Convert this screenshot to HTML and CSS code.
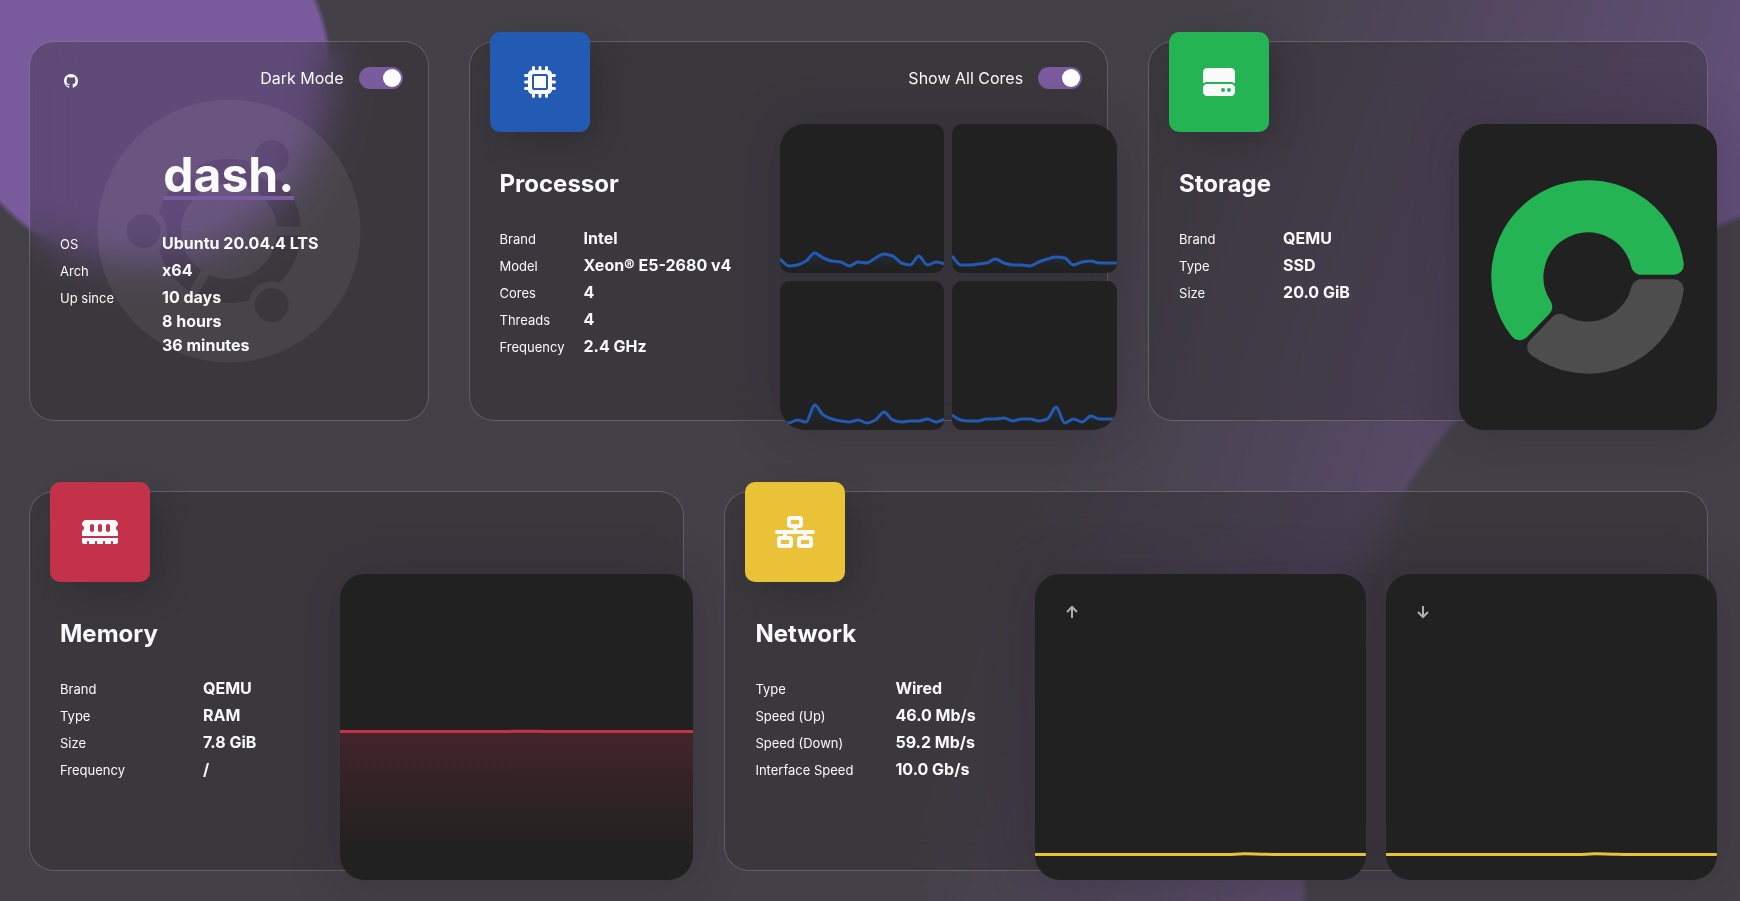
FILE: index.html
```html
<!DOCTYPE html>
<html lang="en">
<head>
  <meta charset="utf-8">
  <meta name="viewport" content="width=device-width, initial-scale=1">
  <title>dash.</title>
  <link rel="stylesheet" href="styles.css">
</head>
<body>
  <main class="dashboard">
    <div class="row">
      <section class="card card-server">
        <svg class="distro" viewBox="-132 -132 264 264" aria-hidden="true">
          <mask id="distro-mask" maskUnits="userSpaceOnUse" x="-132" y="-132" width="264" height="264">
            <circle r="131.5" fill="#fff"/>
            <circle r="60" fill="none" stroke="#000" stroke-width="24"/>
            <g stroke="#fff" stroke-width="9">
              <path d="M46 0H74"/>
              <path d="M46 0H74" transform="rotate(120)"/>
              <path d="M46 0H74" transform="rotate(240)"/>
            </g>
            <g fill="#000" stroke="#fff" stroke-width="6.5">
              <circle cx="-85.5" cy="0" r="20.2"/>
              <circle cx="42.7" cy="-74" r="20.2"/>
              <circle cx="42.7" cy="74" r="20.2"/>
            </g>
          </mask>
          <rect x="-132" y="-132" width="264" height="264" fill="#fff" mask="url(#distro-mask)"/>
        </svg>
        <header class="server-head">
          <a class="github" href="#" aria-label="GitHub">
            <svg viewBox="0 0 16 16" aria-hidden="true"><path d="M8 0C3.58 0 0 3.58 0 8c0 3.54 2.29 6.53 5.47 7.59.4.07.55-.17.55-.38 0-.19-.01-.82-.01-1.49-2.01.37-2.53-.49-2.69-.94-.09-.23-.48-.94-.82-1.13-.28-.15-.68-.52-.01-.53.63-.01 1.08.58 1.23.82.72 1.21 1.87.87 2.33.66.07-.52.28-.87.51-1.07-1.78-.2-3.64-.89-3.64-3.95 0-.87.31-1.59.82-2.15-.08-.2-.36-1.02.08-2.12 0 0 .67-.21 2.2.82.64-.18 1.32-.27 2-.27s1.36.09 2 .27c1.53-1.04 2.2-.82 2.2-.82.44 1.1.16 1.92.08 2.12.51.56.82 1.27.82 2.15 0 3.07-1.87 3.75-3.65 3.95.29.25.54.73.54 1.48 0 1.07-.01 1.93-.01 2.2 0 .21.15.46.55.38A8.01 8.01 0 0 0 16 8c0-4.42-3.58-8-8-8z"/></svg>
          </a>
          <label class="switch">Dark Mode <input type="checkbox" checked></label>
        </header>
        <h1 class="brand">dash.</h1>
        <table class="specs">
          <tr><th scope="row">OS</th><td>Ubuntu 20.04.4 LTS</td></tr>
          <tr><th scope="row">Arch</th><td>x64</td></tr>
          <tr><th scope="row">Up since</th><td>10 days<br>8 hours<br>36 minutes</td></tr>
        </table>
      </section>

      <section class="card card-cpu">
        <div class="info">
          <div class="badge badge-cpu">
            <svg viewBox="0 0 512 512" aria-hidden="true"><path d="M176 24c0-13.3-10.7-24-24-24s-24 10.7-24 24V64c-35.3 0-64 28.7-64 64H24c-13.3 0-24 10.7-24 24s10.7 24 24 24H64v56H24c-13.3 0-24 10.7-24 24s10.7 24 24 24H64v56H24c-13.3 0-24 10.7-24 24s10.7 24 24 24H64c0 35.3 28.7 64 64 64v40c0 13.3 10.7 24 24 24s24-10.7 24-24V448h56v40c0 13.3 10.7 24 24 24s24-10.7 24-24V448h56v40c0 13.3 10.7 24 24 24s24-10.7 24-24V448c35.3 0 64-28.7 64-64h40c13.3 0 24-10.7 24-24s-10.7-24-24-24H448V280h40c13.3 0 24-10.7 24-24s-10.7-24-24-24H448V176h40c13.3 0 24-10.7 24-24s-10.7-24-24-24H448c0-35.3-28.7-64-64-64V24c0-13.3-10.7-24-24-24s-24 10.7-24 24V64H280V24c0-13.3-10.7-24-24-24s-24 10.7-24 24V64H176V24zM160 128H352c17.7 0 32 14.3 32 32V352c0 17.7-14.3 32-32 32H160c-17.7 0-32-14.3-32-32V160c0-17.7 14.3-32 32-32zm192 32H160V352H352V160z"/></svg>
          </div>
          <h2 class="title">Processor</h2>
          <table class="specs">
            <tr><th scope="row">Brand</th><td>Intel</td></tr>
            <tr><th scope="row">Model</th><td>Xeon® E5-2680 v4</td></tr>
            <tr><th scope="row">Cores</th><td>4</td></tr>
            <tr><th scope="row">Threads</th><td>4</td></tr>
            <tr><th scope="row">Frequency</th><td>2.4 GHz</td></tr>
          </table>
        </div>
        <div class="visual">
          <div class="visual-head">
            <label class="switch">Show All Cores <input type="checkbox" checked></label>
          </div>
          <div class="charts charts-cores">
            <div class="chart"><svg class="plot plot-cpu" viewBox="0 0 165 149" preserveAspectRatio="none" data-floor="143" data-values="135 142 141 137 129 134 137 138 142 138 139 134 130 132 139 141 132 141 138 140"></svg></div>
            <div class="chart"><svg class="plot plot-cpu" viewBox="0 0 165 149" preserveAspectRatio="none" data-floor="143" data-values="132 141 141 140 139 135 139 141 141 142 138 135 133 134 141 138 137 139 139 139"></svg></div>
            <div class="chart"><svg class="plot plot-cpu" viewBox="0 0 165 149" preserveAspectRatio="none" data-floor="143" data-values="142 142 139 141 124 134 138 140 141 139 142 139 131 139 141 140 140 138 141 138"></svg></div>
            <div class="chart"><svg class="plot plot-cpu" viewBox="0 0 165 149" preserveAspectRatio="none" data-floor="143" data-values="134 139 140 140 138 138 137 140 138 138 140 138 126 142 138 141 135 138 138 138"></svg></div>
          </div>
        </div>
      </section>

      <section class="card card-storage">
        <div class="info">
          <div class="badge badge-storage">
            <svg viewBox="0 0 512 512" aria-hidden="true"><path d="M0 96C0 60.7 28.7 32 64 32H448c35.3 0 64 28.7 64 64V280.4c-17-15.2-39.4-24.4-64-24.4H64c-24.6 0-47 9.2-64 24.4V96zM64 288H448c35.3 0 64 28.7 64 64v64c0 35.3-28.7 64-64 64H64c-35.3 0-64-28.7-64-64V352c0-35.3 28.7-64 64-64zM320 416a32 32 0 1 0 0-64 32 32 0 1 0 0 64zm128-32a32 32 0 1 0-64 0 32 32 0 1 0 64 0z"/></svg>
          </div>
          <h2 class="title">Storage</h2>
          <table class="specs">
            <tr><th scope="row">Brand</th><td>QEMU</td></tr>
            <tr><th scope="row">Type</th><td>SSD</td></tr>
            <tr><th scope="row">Size</th><td>20.0 GiB</td></tr>
          </table>
        </div>
        <div class="visual">
          <div class="visual-head"></div>
          <div class="charts">
            <div class="chart chart-pie">
              <svg class="donut" viewBox="-97 -97 194 194" role="img" aria-label="Storage usage">
                <path class="donut-used" d="M85.8-12.2A86.7 86.7 0 1 0-68.4 53.2L-45.7 29.7A54.5 54.5 0 1 1 53.1-12.2Z"/>
                <path class="donut-free" d="M85.8 12.2A86.7 86.7 0 0 1-50.8 70.2L-28.1 46.7A54.5 54.5 0 0 0 53.1 12.2Z"/>
              </svg>
            </div>
          </div>
        </div>
      </section>
    </div>

    <div class="row">
      <section class="card card-memory">
        <div class="info">
          <div class="badge badge-memory">
            <svg viewBox="0 0 576 512" aria-hidden="true"><path d="M64 64C28.7 64 0 92.7 0 128v7.4c0 6.8 4.4 12.6 10.1 16.3C23.3 160.3 32 175.1 32 192s-8.7 31.7-21.9 40.3C4.4 236 0 241.8 0 248.6V320H576V248.6c0-6.8-4.4-12.6-10.1-16.3C552.7 223.7 544 208.9 544 192s8.7-31.7 21.9-40.3c5.7-3.7 10.1-9.5 10.1-16.3V128c0-35.3-28.7-64-64-64H64zM576 352H0v64c0 17.7 14.3 32 32 32H80V416c0-8.8 7.2-16 16-16s16 7.2 16 16v32h96V416c0-8.8 7.2-16 16-16s16 7.2 16 16v32h96V416c0-8.8 7.2-16 16-16s16 7.2 16 16v32h96V416c0-8.8 7.2-16 16-16s16 7.2 16 16v32h48c17.7 0 32-14.3 32-32V352zM192 160v64c0 17.7-14.3 32-32 32s-32-14.3-32-32V160c0-17.7 14.3-32 32-32s32 14.3 32 32zm128 0v64c0 17.7-14.3 32-32 32s-32-14.3-32-32V160c0-17.7 14.3-32 32-32s32 14.3 32 32zm128 0v64c0 17.7-14.3 32-32 32s-32-14.3-32-32V160c0-17.7 14.3-32 32-32s32 14.3 32 32z"/></svg>
          </div>
          <h2 class="title">Memory</h2>
          <table class="specs">
            <tr><th scope="row">Brand</th><td>QEMU</td></tr>
            <tr><th scope="row">Type</th><td>RAM</td></tr>
            <tr><th scope="row">Size</th><td>7.8 GiB</td></tr>
            <tr><th scope="row">Frequency</th><td>/</td></tr>
          </table>
        </div>
        <div class="visual">
          <div class="visual-head"></div>
          <div class="charts">
            <div class="chart"><svg class="plot plot-memory" viewBox="0 0 354 306" preserveAspectRatio="none" data-floor="281" data-values="157.5 157.5 157.5 157.5 157.4 157.5 157.5 157.5 157.5 157.4 157.2 157.4 157.5 157.5 157.5 157.5 157.5 157.5 157.5 157.5"></svg></div>
          </div>
        </div>
      </section>

      <section class="card card-network">
        <div class="info">
          <div class="badge badge-network">
            <svg viewBox="0 0 640 512" aria-hidden="true"><path d="M256 64H384v64H256V64zM240 0c-26.5 0-48 21.5-48 48v96c0 26.5 21.5 48 48 48h48v32H32c-17.7 0-32 14.3-32 32s14.3 32 32 32h96v32H80c-26.5 0-48 21.5-48 48v96c0 26.5 21.5 48 48 48H240c26.5 0 48-21.5 48-48V368c0-26.5-21.5-48-48-48H192V288H448v32H400c-26.5 0-48 21.5-48 48v96c0 26.5 21.5 48 48 48H560c26.5 0 48-21.5 48-48V368c0-26.5-21.5-48-48-48H512V288h96c17.7 0 32-14.3 32-32s-14.3-32-32-32H352V192h48c26.5 0 48-21.5 48-48V48c0-26.5-21.5-48-48-48H240zM96 448V384H224v64H96zm320-64H544v64H416V384z"/></svg>
          </div>
          <h2 class="title">Network</h2>
          <table class="specs">
            <tr><th scope="row">Type</th><td>Wired</td></tr>
            <tr><th scope="row">Speed (Up)</th><td>46.0 Mb/s</td></tr>
            <tr><th scope="row">Speed (Down)</th><td>59.2 Mb/s</td></tr>
            <tr><th scope="row">Interface Speed</th><td>10.0 Gb/s</td></tr>
          </table>
        </div>
        <div class="visual">
          <div class="visual-head"></div>
          <div class="charts charts-network">
            <div class="chart">
              <svg class="arrow" viewBox="0 0 12 14" role="img" aria-label="Upload"><path d="M6 13V2M1 7 6 2 11 7"/></svg>
              <svg class="plot plot-network" viewBox="0 0 331 306" preserveAspectRatio="none" data-floor="281" data-values="280.5 280.5 280.5 280.5 280.5 280.5 280.5 280.5 280.5 280.5 280.5 280.5 279.8 280.2 280.5 280.5 280.5 280.5 280.5 280.5"></svg>
            </div>
            <div class="chart">
              <svg class="arrow" viewBox="0 0 12 14" role="img" aria-label="Download"><path d="M6 1V12M1 7 6 12 11 7"/></svg>
              <svg class="plot plot-network" viewBox="0 0 331 306" preserveAspectRatio="none" data-floor="281" data-values="280.5 280.5 280.5 280.5 280.5 280.5 280.5 280.5 280.5 280.5 280.5 280.5 279.8 280.2 280.5 280.5 280.5 280.5 280.5 280.5"></svg>
            </div>
          </div>
        </div>
      </section>
    </div>
  </main>
  <script src="charts.js"></script>
</body>
</html>
```
FILE: styles.css
```css
:root {
  --base: #434047;
  --primary: #7a5b9e;
  --surface: #212121;
  --text: #fafafa;
  --cpu: #235ab3;
  --storage: #24b454;
  --memory: #c4314a;
  --network: #e9c237;
}

* {
  box-sizing: border-box;
}

body {
  margin: 0;
  min-height: 100vh;
  color: var(--text);
  font-family: Inter, "Noto Sans", sans-serif;
  font-size: 16px;
  line-height: 24px;
  background:
    radial-gradient(circle at 140px 74px, var(--primary) 187px, transparent 193px),
    radial-gradient(circle at 113.5% 94%, var(--base) 668px, transparent 676px),
    linear-gradient(109deg, var(--base) 59%, var(--primary) 109%);
}

.dashboard {
  display: flex;
  flex-direction: column;
  gap: 70px;
  padding: 41px 32px 30px 29px;
}

.row {
  display: flex;
  gap: 40px;
}

.card {
  position: relative;
  display: flex;
  min-width: 0;
  min-height: 380px;
  border: 1px solid rgba(255, 255, 255, 0.2);
  border-radius: 25px;
  background: rgba(43, 40, 42, 0.33);
  backdrop-filter: blur(20px);
}

.card-server {
  --label: 102px;
  flex: 399 1 0;
  flex-direction: column;
}

.card-cpu {
  --label: 84px;
  flex: 640 1 0;
}

.card-storage {
  --label: 104px;
  flex: 560 1 0;
}

.card-memory {
  --label: 143px;
  flex: 655 1 0;
}

.card-network {
  --label: 140px;
  flex: 984 1 0;
}

/* Server card */

.distro {
  position: absolute;
  inset: 0;
  width: 264px;
  margin: auto;
  opacity: 0.06;
}

.server-head {
  position: relative;
  display: flex;
  justify-content: space-between;
  align-items: flex-start;
  height: 104px;
  padding: 24px 25px 0 34px;
}

.github {
  display: block;
  padding-top: 8px;
}

.github svg {
  display: block;
  width: 14px;
  height: 14px;
  fill: var(--text);
}

.brand {
  position: relative;
  margin: 0;
  font-size: 48px;
  font-weight: 700;
  line-height: 58px;
  text-align: center;
  text-decoration: underline;
  text-decoration-color: var(--primary);
  text-decoration-thickness: 4px;
  text-underline-offset: 4px;
}

/* Switch */

.switch {
  display: flex;
  align-items: center;
  gap: 15px;
}

.switch input {
  appearance: none;
  display: flex;
  width: 44px;
  height: 22px;
  margin: 0;
  padding: 2px;
  border-radius: 11px;
  background: #6c6c6c;
  cursor: pointer;
}

.switch input::before {
  content: "";
  width: 18px;
  height: 18px;
  border-radius: 50%;
  background: #fff;
}

.switch input:checked {
  justify-content: flex-end;
  background: var(--primary);
}

/* Info column */

.info {
  flex: 0 0 310px;
}

.badge {
  display: flex;
  align-items: center;
  justify-content: center;
  width: 100px;
  height: 100px;
  margin: -10px 0 0 20px;
  border-radius: 10px;
  box-shadow: 13px 13px 35px rgba(0, 0, 0, 0.15);
}

.badge svg {
  height: 32px;
  fill: var(--text);
}

.badge-cpu {
  background: var(--cpu);
}

.badge-storage {
  background: var(--storage);
}

.badge-memory {
  background: var(--memory);
}

.badge-network {
  background: var(--network);
}

.title {
  margin: 36px 0 0 30px;
  font-size: 24px;
  font-weight: 700;
  line-height: 32px;
}

.specs {
  position: relative;
  margin: 26px 0 0 30px;
  border-collapse: collapse;
}

.brand + .specs {
  margin-top: 27px;
}

.specs th,
.specs td {
  padding: 0 0 3px;
  text-align: left;
  vertical-align: baseline;
  white-space: nowrap;
}

.specs th {
  width: var(--label);
  font-size: 13px;
  font-weight: 400;
  line-height: 18px;
}

.specs td {
  font-weight: 700;
}

/* Charts */

.visual {
  display: flex;
  flex: 1;
  flex-direction: column;
  min-width: 0;
  margin: 0 -10px -10px 0;
}

.visual-head {
  display: flex;
  justify-content: flex-end;
  align-items: flex-start;
  height: 82px;
  padding: 24px 35px 0 0;
}

.charts {
  display: grid;
  flex: 1;
  border-radius: 25px;
  background: rgba(30, 20, 40, 0.15);
  box-shadow: 0 0 50px rgba(30, 20, 40, 0.25);
}

.charts-cores {
  grid-template-columns: 1fr 1fr;
  grid-template-rows: 1fr 1fr;
  gap: 8px;
}

.charts-network {
  grid-template-columns: 1fr 1fr;
  gap: 20px;
}

.chart {
  position: relative;
  min-width: 0;
  overflow: hidden;
  border-radius: 25px;
  background: var(--surface);
}

.charts-cores .chart {
  border-radius: 10px;
}

.charts-cores .chart:nth-child(1) {
  border-top-left-radius: 25px;
}

.charts-cores .chart:nth-child(2) {
  border-top-right-radius: 25px;
}

.charts-cores .chart:nth-child(3) {
  border-bottom-left-radius: 25px;
}

.charts-cores .chart:nth-child(4) {
  border-bottom-right-radius: 25px;
}

.plot {
  position: absolute;
  inset: 0;
  width: 100%;
  height: 100%;
}

.plot-cpu {
  color: var(--cpu);
}

.plot-memory {
  color: var(--memory);
}

.plot-network {
  color: var(--network);
}

.plot-line {
  fill: none;
  stroke: currentColor;
  stroke-width: 3px;
  vector-effect: non-scaling-stroke;
}

.arrow {
  display: block;
  width: 12px;
  height: 14px;
  margin: 31px 0 0 31px;
  fill: none;
  stroke: #b0b0b0;
  stroke-width: 2px;
}

.chart-pie {
  display: flex;
  align-items: center;
  justify-content: center;
}

.donut {
  width: 194px;
}

.donut path {
  stroke-width: 20px;
  stroke-linejoin: round;
}

.donut-used {
  fill: var(--storage);
  stroke: var(--storage);
}

.donut-free {
  fill: #4d4d4d;
  stroke: #4d4d4d;
}
```
FILE: charts.js
```js
// Draws each .plot as a monotone curve with a gradient-filled area down to its floor.
function curve(points) {
  const n = points.length;
  const slope = [];
  for (let i = 0; i < n - 1; i++) {
    slope.push((points[i + 1][1] - points[i][1]) / (points[i + 1][0] - points[i][0]));
  }
  const tangent = points.map((_, i) => {
    if (i === 0) return slope[0];
    if (i === n - 1) return slope[n - 2];
    const a = slope[i - 1];
    const b = slope[i];
    return a * b <= 0 ? 0 : (2 * a * b) / (a + b);
  });
  let d = `M${points[0][0]} ${points[0][1]}`;
  for (let i = 0; i < n - 1; i++) {
    const [x0, y0] = points[i];
    const [x1, y1] = points[i + 1];
    const h = (x1 - x0) / 3;
    d += `C${x0 + h} ${y0 + h * tangent[i]} ${x1 - h} ${y1 - h * tangent[i + 1]} ${x1} ${y1}`;
  }
  return d;
}

document.querySelectorAll(".plot").forEach((svg, index) => {
  const { width } = svg.viewBox.baseVal;
  const values = svg.dataset.values.split(" ").map(Number);
  const step = width / (values.length - 1);
  const line = curve(values.map((y, i) => [i * step, y]));
  svg.innerHTML = `
    <linearGradient id="area-${index}" x1="0" y1="0" x2="0" y2="1">
      <stop offset="5%" stop-color="currentColor" stop-opacity="0.2"/>
      <stop offset="95%" stop-color="currentColor" stop-opacity="0"/>
    </linearGradient>
    <path d="${line}V${svg.dataset.floor}H0Z" fill="url(#area-${index})"/>
    <path class="plot-line" d="${line}"/>`;
});
```
